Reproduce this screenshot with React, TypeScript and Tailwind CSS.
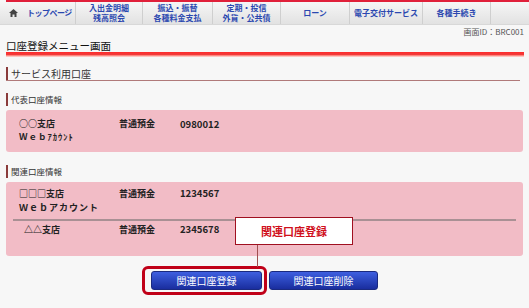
import React from "react";

const tabs = [
  { w: "w-[67px]", lines: ["入出金明細", "残高照会"] },
  { w: "w-[70px]", lines: ["振込・振替", "各種料金支払"] },
  { w: "w-[68px]", lines: ["定期・投信", "外貨・公共債"] },
  { w: "w-[69px]", lines: ["ローン"] },
  { w: "w-[73px]", lines: ["電子交付サービス"] },
  { w: "w-[68px]", lines: ["各種手続き"] },
];

function SubHeading({ label, big }: { label: string; big?: boolean }) {
  return (
    <div className="flex items-center h-[14px] ml-[6px]">
      <div className="w-[2px] h-[13px] bg-[#8a3b3b]" />
      <span className={big ? "ml-[3px] text-[10px] text-[#333]" : "ml-[3px] text-[8.5px] text-[#333]"}>
        {label}
      </span>
    </div>
  );
}

function AccountRow({
  branch,
  web,
  num,
  indent,
  tight,
}: {
  branch: string;
  web?: string;
  num: string;
  indent?: boolean;
  tight?: boolean;
}) {
  return (
    <div className={`flex text-[9px] font-bold text-[#222] ${tight ? "leading-[12px]" : "leading-[13px]"}`}>
      <div className={indent ? "w-[100px] pl-[5px]" : "w-[100px]"}>
        <div>{branch}</div>
        {web && <div className={tight ? "text-[8.5px] tracking-[1px]" : "mt-[1px] tracking-[1px]"}>{web}</div>}
      </div>
      <div className="w-[61px]">普通預金</div>
      <div className="text-[9.5px]">{num}</div>
    </div>
  );
}

export default function App() {
  return (
    <div
      className="relative w-[529px] h-[308px] overflow-hidden bg-[#f7f7f7]"
      style={{ fontFamily: '"Noto Sans CJK JP", "Noto Sans", sans-serif' }}
    >
      {/* top nav */}
      <div className="h-[2px] ml-[6px] bg-[#e0203a]" />
      <div className="flex h-[23px] bg-gradient-to-b from-[#f6f6f6] to-[#e2e2e2] border-b border-[#d8d8d8]">
        <div className="w-[76px] flex items-center pl-[9px] border-r border-[#cfcfcf] whitespace-nowrap">
          <svg width="9" height="8" viewBox="0 0 9 8" className="mr-[9px] shrink-0">
            <path d="M4.5 0 L9 4 L7.5 4 L7.5 8 L5.5 8 L5.5 5.5 L3.5 5.5 L3.5 8 L1.5 8 L1.5 4 L0 4 Z" fill="#444" />
          </svg>
          <span className="text-[8px] tracking-[-0.5px] font-bold text-[#2b48b0]">トップページ</span>
        </div>
        {tabs.map((t, i) => (
          <div
            key={i}
            className={`${t.w} flex flex-col items-center justify-center border-r border-[#cfcfcf] text-[8px] leading-[10px] font-bold text-[#2b48b0] whitespace-nowrap`}
          >
            {t.lines.map((l) => (
              <span key={l}>{l}</span>
            ))}
          </div>
        ))}
        <div className="flex-1" />
      </div>

      <div className="flex justify-end pr-[5px] mt-[2px] h-[9px] text-[8px] leading-[9px] text-[#555]">
        画面ID：BRC001
      </div>

      {/* title */}
      <div className="ml-[6px] mt-[3px] h-[13px] text-[10.5px] leading-[13px] text-[#111]">口座登録メニュー画面</div>
      <div className="ml-[6px] mr-[5px] h-[5px] bg-gradient-to-b from-[#ff2a2a] via-[#f23a3a] to-[#fbe0e0]" />

      {/* section */}
      <div className="mt-[9px]">
        <SubHeading label="サービス利用口座" big />
        <div className="ml-[6px] mr-[9px] h-[1px] bg-[#b07a7a]" />
      </div>

      <div className="mt-[11px]">
        <SubHeading label="代表口座情報" />
      </div>
      <div className="ml-[6px] mr-[6px] mt-[4px] h-[42px] rounded-[3px] bg-[#f2bcc6] pt-[8px] pl-[13px]">
        <AccountRow branch="○○支店" web="Ｗｅｂｱｶｳﾝﾄ" num="0980012" tight />
      </div>

      <div className="mt-[12px]">
        <SubHeading label="関連口座情報" />
      </div>
      <div className="ml-[6px] mr-[6px] mt-[4px] h-[74px] rounded-[3px] bg-[#f2bcc6] pt-[5px] px-[7px]">
        <div className="pl-[6px]">
          <AccountRow branch="□□□支店" web="Ｗｅｂアカウント" num="1234567" />
        </div>
        <div className="mt-[5px] h-[2px] bg-[#a99094]" />
        <div className="pl-[6px] mt-[2px]">
          <AccountRow branch="△△支店" num="2345678" indent />
        </div>
      </div>

      {/* buttons */}
      <div className="flex mt-[10px] ml-[142px] items-center">
        <div className="pl-[6px] pr-[2px] py-[2px] rounded-[6px] border-[3px] border-[#c00018]">
          <button className="block w-[111px] h-[19px] rounded-[3px] bg-gradient-to-b from-[#3e5fe0] to-[#1a2d9e] border border-[#1a2a80] text-white text-[10px] leading-[17px]">
            関連口座登録
          </button>
        </div>
        <button className="ml-[2px] w-[109px] h-[19px] rounded-[3px] bg-gradient-to-b from-[#3e5fe0] to-[#1a2d9e] border border-[#1a2a80] text-white text-[10px] leading-[17px]">
          関連口座削除
        </button>
      </div>

      {/* callout */}
      <div className="absolute left-[235px] top-[217px] w-[118px] h-[28px] bg-white border border-[#a01020] flex items-center justify-center text-[11px] font-bold text-[#d0101c]">
        関連口座登録
      </div>
      <div className="absolute left-[257px] top-[245px] w-[1px] h-[22px] bg-[#a05050]" />
    </div>
  );
}
